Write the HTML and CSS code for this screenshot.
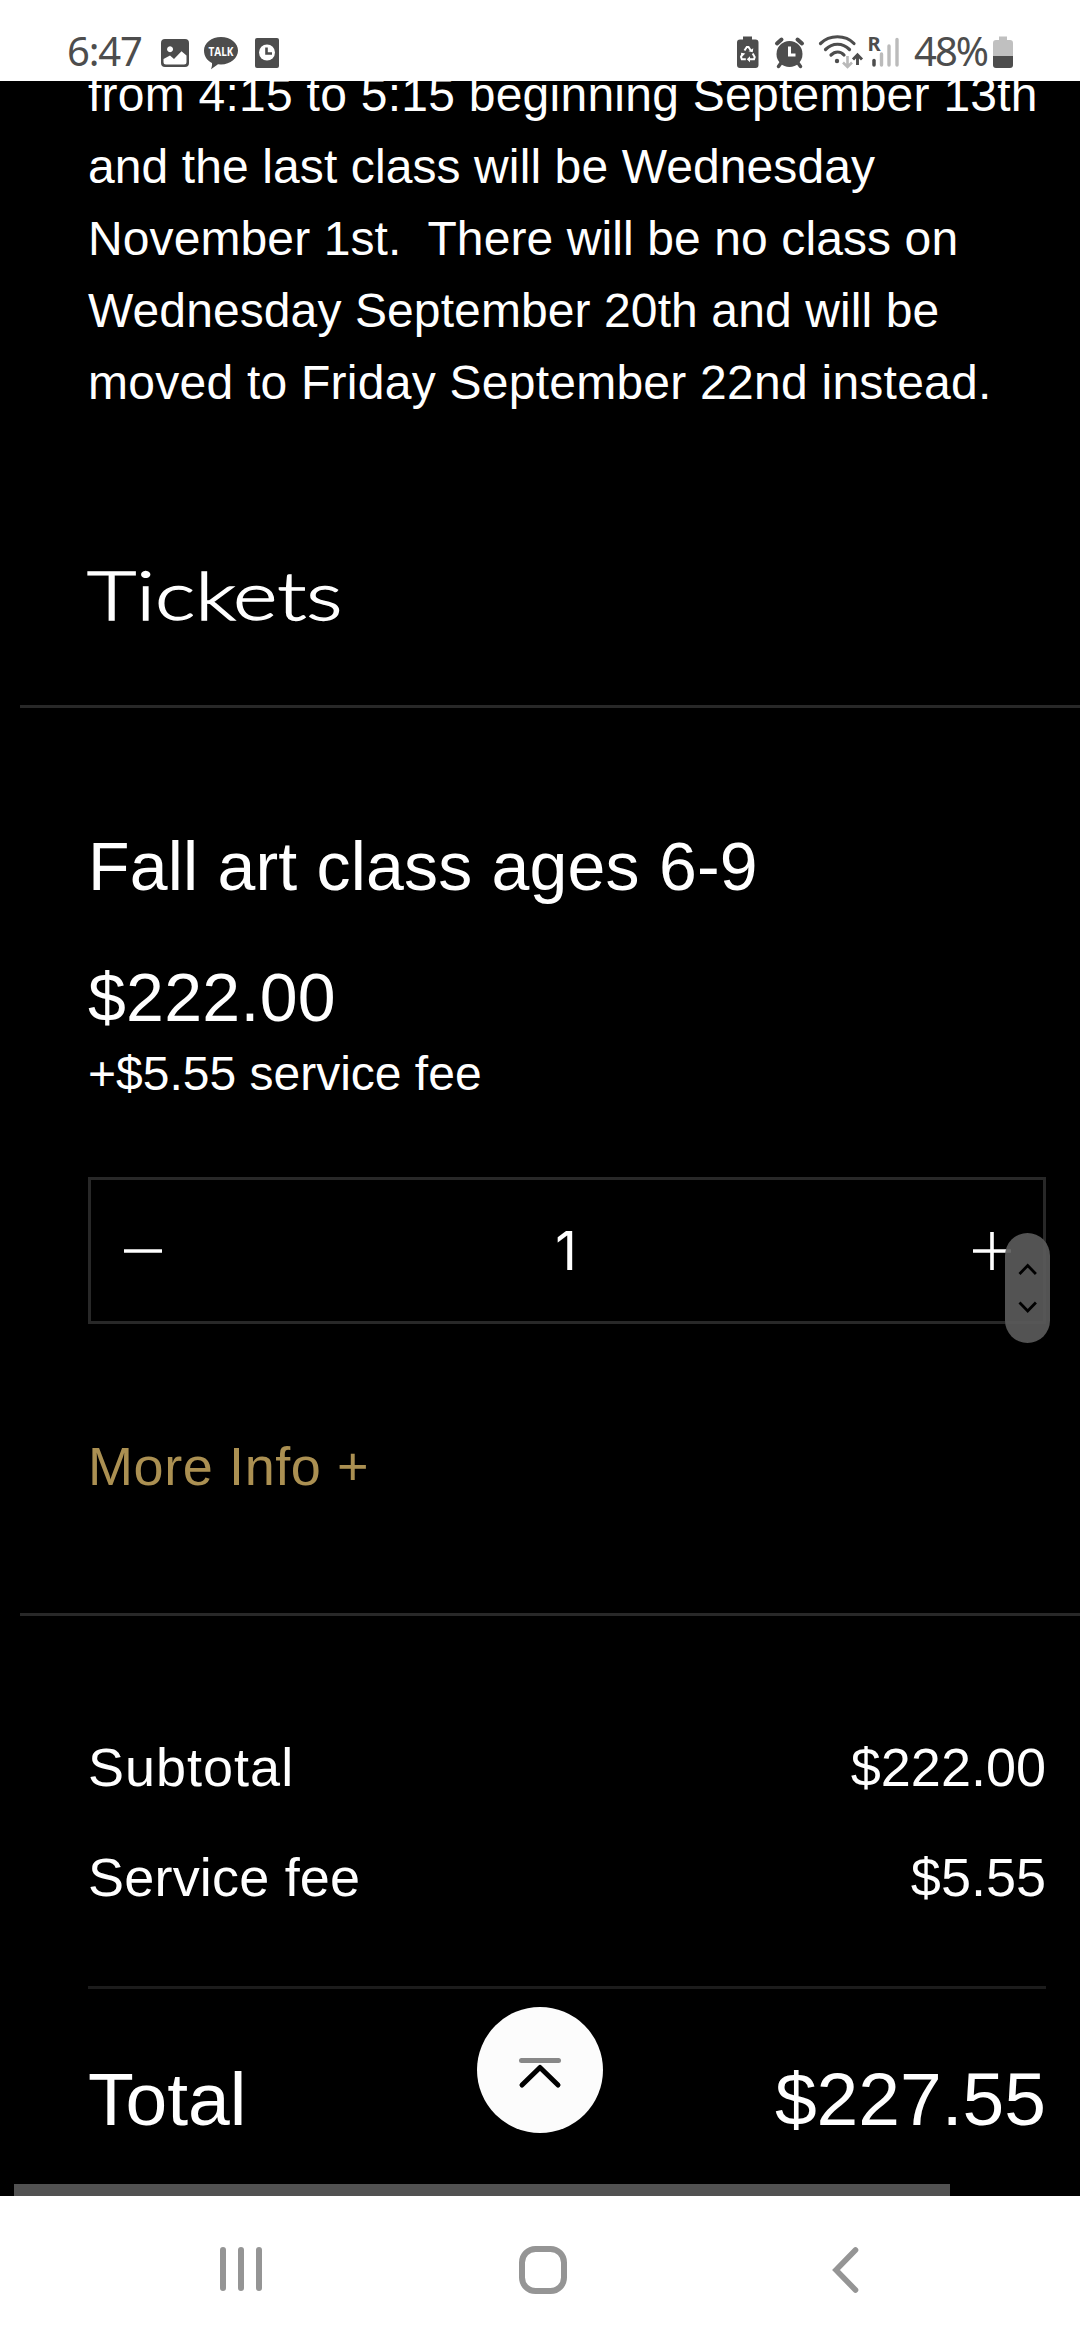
FILE: index.html
```html
<!DOCTYPE html>
<html lang="en">
<head>
<meta charset="utf-8">
<title>Tickets</title>
<link rel="stylesheet" href="styles.css">
</head>
<body>
<header class="status">
  <span class="status-text clock">6:47</span>
  <svg class="status-left" width="124" height="40" viewBox="158 32 124 40">
    <path fill="#4d4d4d" fill-rule="evenodd" d="M165 39h20a4 4 0 0 1 4 4v20a4 4 0 0 1-4 4h-20a4 4 0 0 1-4-4V43a4 4 0 0 1 4-4zM163.500 59v3a2.500 2.500 0 0 0 2.500 2.500h18a2.500 2.500 0 0 0 2.500-2.500v-6.500l-5-4.200-7.500 7.700-4-3.500zM170 46.200a3 3 0 1 0 .1 0z"/>
    <path fill="#4d4d4d" d="M221 37c9.500 0 17 6.200 17 13.500S230.500 64.500 221 64.500l-3-.2-7 5c1-3 1.200-4.500 1-6.300-5-2.500-8-7-8-12.500C204 43.200 211.500 37 221 37z"/>
    <text x="221" y="56" class="talk" textLength="25" lengthAdjust="spacingAndGlyphs">TALK</text>
    <rect x="255" y="38" width="24" height="30" rx="2" fill="#4d4d4d"/>
    <circle cx="267" cy="52.500" r="8" fill="#fff"/>
    <path d="M266.500 47.500v6h5.500" fill="none" stroke="#4d4d4d" stroke-width="2.600"/>
  </svg>
  <svg class="status-right" width="166" height="40" viewBox="734 32 166 40">
    <path fill="#4d4d4d" d="M743 36.500h9v3h3.500a3 3 0 0 1 3 3V65a3 3 0 0 1-3 3H740a3 3 0 0 1-3-3V42.500a3 3 0 0 1 3-3h3z"/>
    <path fill="none" stroke="#fff" stroke-width="2" d="M744.500 50.500l2.300-3.500h1.700l2.500 3.700M742.800 53.300l-1.800 3.500.8 2.400h4M749.500 59.200h4.500l.7-2.200-2-3.500"/>
    <path fill="#fff" d="M748.500 51.200l4.200 1 .6-4zM745.300 53.500l-4.500-.7 1.500 3.800zM750 56.200v6l-3.200-3z"/>
    <circle cx="789.500" cy="54" r="13" fill="#4d4d4d"/>
    <g fill="none" stroke="#4d4d4d" stroke-width="4" stroke-linecap="round"><path d="M777 43.500l4.500-4M802 43.500l-4.500-4"/><path stroke-width="3.500" d="M781 63l-2.500 3.500M798 63l2.500 3.500"/></g>
    <path d="M789.500 46.500v8.500h6" fill="none" stroke="#fff" stroke-width="3"/>
    <g fill="none" stroke="#4d4d4d" stroke-width="3.200" stroke-linecap="round"><path d="M820.500 43.500c9-9 25-9 33.500 0M825.500 49.500c7-7 17-7 24 0M831 55c4-4 9.500-4 13 0"/></g>
    <circle cx="837" cy="61" r="2.200" fill="#4d4d4d"/>
    <path d="M847.500 56v11M843 62.500l4.500 4.500 4.500-4.500" fill="none" stroke="#b9b9b9" stroke-width="2.600"/>
    <path d="M857.500 65V54.500M853 59.500l4.500-4.700 4.500 4.700" fill="none" stroke="#4d4d4d" stroke-width="2.900"/>
    <text x="867.500" y="51" class="roam">R</text>
    <path d="M874 60.500v4.500" stroke="#4d4d4d" stroke-width="3.500" stroke-linecap="round"/>
    <path d="M881.500 54v11M889 46v19M897 39.500v25.500" stroke="#bbb" stroke-width="3.400" stroke-linecap="round"/>
  </svg>
  <span class="status-text percent">48%</span>
  <svg class="battery" width="20" height="32" viewBox="0 0 20 32">
    <path fill="#c0c0c0" d="M6 .5h8V4h3a3 3 0 0 1 3 3v13H0V7a3 3 0 0 1 3-3h3z"/>
    <path fill="#4d4d4d" d="M0 20h20v9a3 3 0 0 1-3 3H3a3 3 0 0 1-3-3z"/>
  </svg>
</header>
<main class="page">
  <p class="description"><span class="loose">from 4:15 to 5:15 beginning September 13th</span><br>and the last class will be Wednesday<br>November 1st.&nbsp; There will be no class on<br>Wednesday September 20th and will be<br><span class="loose">moved to Friday September 22nd instead.</span></p>
  <h2 class="heading">Tickets</h2>
  <section class="ticket">
    <h3 class="name">Fall art class ages 6-9</h3>
    <p class="price">$222.00</p>
    <p class="fee">+$5.55 service fee</p>
    <div class="stepper">
      <svg width="38" height="38" viewBox="0 0 38 38"><path d="M0 19h38" stroke="#fff" stroke-width="3.600"/></svg>
      <span class="quantity">1</span>
      <svg width="38" height="38" viewBox="0 0 38 38"><path d="M0 19h38M19 0v38" stroke="#fff" stroke-width="3.600"/></svg>
    </div>
    <a class="more">More Info +</a>
  </section>
  <section class="totals">
    <div class="row"><span class="subtotal">Subtotal</span><span>$222.00</span></div>
    <div class="row"><span class="service">Service fee</span><span>$5.55</span></div>
    <div class="row total"><span>Total</span><span>$227.55</span></div>
  </section>
  <svg class="scroll-handle" width="45" height="110" viewBox="0 0 45 110">
    <rect width="45" height="110" rx="22.500" fill="#5a5a5a" fill-opacity=".92"/>
    <path d="M14.500 41l8.200-8.500 8.200 8.500M14.500 69.500l8.200 8.500 8.200-8.500" fill="none" stroke="#000" stroke-width="2.800"/>
  </svg>
  <svg class="to-top" width="126" height="126" viewBox="0 0 126 126">
    <circle cx="63" cy="63" r="63" fill="#fcfcfc"/>
    <path d="M44.500 53.500h37" stroke="#888" stroke-width="5" stroke-linecap="round"/>
    <path d="M45 78l18-17.500L81 78" fill="none" stroke="#000" stroke-width="5" stroke-linecap="round" stroke-linejoin="round"/>
  </svg>
  <div class="scrollbar"></div>
</main>
<nav class="navbar">
  <svg width="42" height="46" viewBox="0 0 42 46"><path d="M3 4v38M21 4v38M39 4v38" stroke="#959595" stroke-width="6" stroke-linecap="round"/></svg>
  <svg class="home" width="48" height="48" viewBox="0 0 48 48"><rect x="3" y="3" width="42" height="42" rx="13.500" fill="none" stroke="#959595" stroke-width="6"/></svg>
  <svg width="27" height="48" viewBox="0 0 27 48"><path d="M23.500 4L4 24l19.500 20" fill="none" stroke="#959595" stroke-width="5.600" stroke-linecap="round"/></svg>
</nav>
</body>
</html>
```

FILE: styles.css
```css
* { box-sizing: border-box; }
body {
  margin: 0;
  width: 1080px;
  height: 2340px;
  display: flex;
  flex-direction: column;
  overflow: hidden;
  background: #fff;
  font-family: "Liberation Sans", Arial, sans-serif;
  color: #fff;
}
svg { display: block; flex: none; }
h2, h3, p { margin: 0; font-weight: 400; }

.status {
  height: 81px;
  flex: none;
  display: flex;
  align-items: flex-start;
  padding-left: 67px;
}
.status-text {
  font: 400 40px/56px "Noto Sans", sans-serif;
  color: #4d4d4d;
  margin-top: 23px;
  white-space: nowrap;
}
.clock { width: 91px; letter-spacing: -1.200px; }
.status-left { margin-top: 32px; }
.status-right { margin: 32px 14px 0 452px; }
.percent { width: 79px; letter-spacing: -2px; }
.battery { margin-top: 36px; }
.talk { font: 700 12.500px "Open Sans", sans-serif; fill: #fff; text-anchor: middle; }
.roam { font: 700 20px "Noto Sans", sans-serif; fill: #4d4d4d; }

.page {
  position: relative;
  height: 2115px;
  flex: none;
  overflow: hidden;
  background: #000;
}
.description {
  margin: -22px 0 0 88px;
  font-size: 48px;
  line-height: 72px;
  letter-spacing: .1px;
  white-space: nowrap;
}
.loose { letter-spacing: .250px; }
.heading {
  margin: 135px 0 0 87px;
  padding-bottom: 71px;
  font: 300 67px/80px Lato, sans-serif;
  -webkit-text-stroke: 1.300px #fff;
  transform: scaleX(1.270);
  transform-origin: left;
}
.ticket {
  margin-left: 20px;
  padding: 118px 34px 107px 68px;
  border-top: 3px solid #282828;
  border-bottom: 3px solid #282828;
}
.name { font-size: 68px; line-height: 80px; letter-spacing: .2px; }
.price { margin-top: 51px; font-size: 68px; line-height: 80px; letter-spacing: .3px; }
.fee { margin-top: 7px; font-size: 48px; line-height: 60px; letter-spacing: 0; }
.stepper {
  display: flex;
  justify-content: space-between;
  align-items: center;
  height: 147px;
  margin-top: 73px;
  padding: 0 32px 0 33px;
  border: 3px solid #282828;
}
.quantity { font: 400 53px/60px Inter, sans-serif; padding-right: 3px; }
.more {
  display: block;
  margin-top: 102px;
  font-size: 54px;
  line-height: 80px;
  letter-spacing: .600px;
  color: #ab9052;
}
.totals { padding: 111px 34px 0 88px; }
.row {
  display: flex;
  justify-content: space-between;
  font-size: 54px;
  line-height: 80px;
}
.row + .row { margin-top: 30px; }
.subtotal { letter-spacing: 1px; }
.service { letter-spacing: .200px; }
.row.total {
  margin-top: 69px;
  padding-top: 60px;
  border-top: 3px solid #1c1c1c;
  font-size: 75px;
  line-height: 100px;
}
.scroll-handle { position: absolute; left: 1005px; top: 1152px; }
.to-top { position: absolute; left: 477px; top: 1926px; }
.scrollbar {
  position: absolute;
  left: 14px;
  bottom: 0;
  width: 936px;
  height: 12px;
  background: #525252;
}
.navbar {
  height: 144px;
  display: flex;
  padding: 50px 0 0 220px;
}
.home { margin: 0 265px 0 257px; }
```
